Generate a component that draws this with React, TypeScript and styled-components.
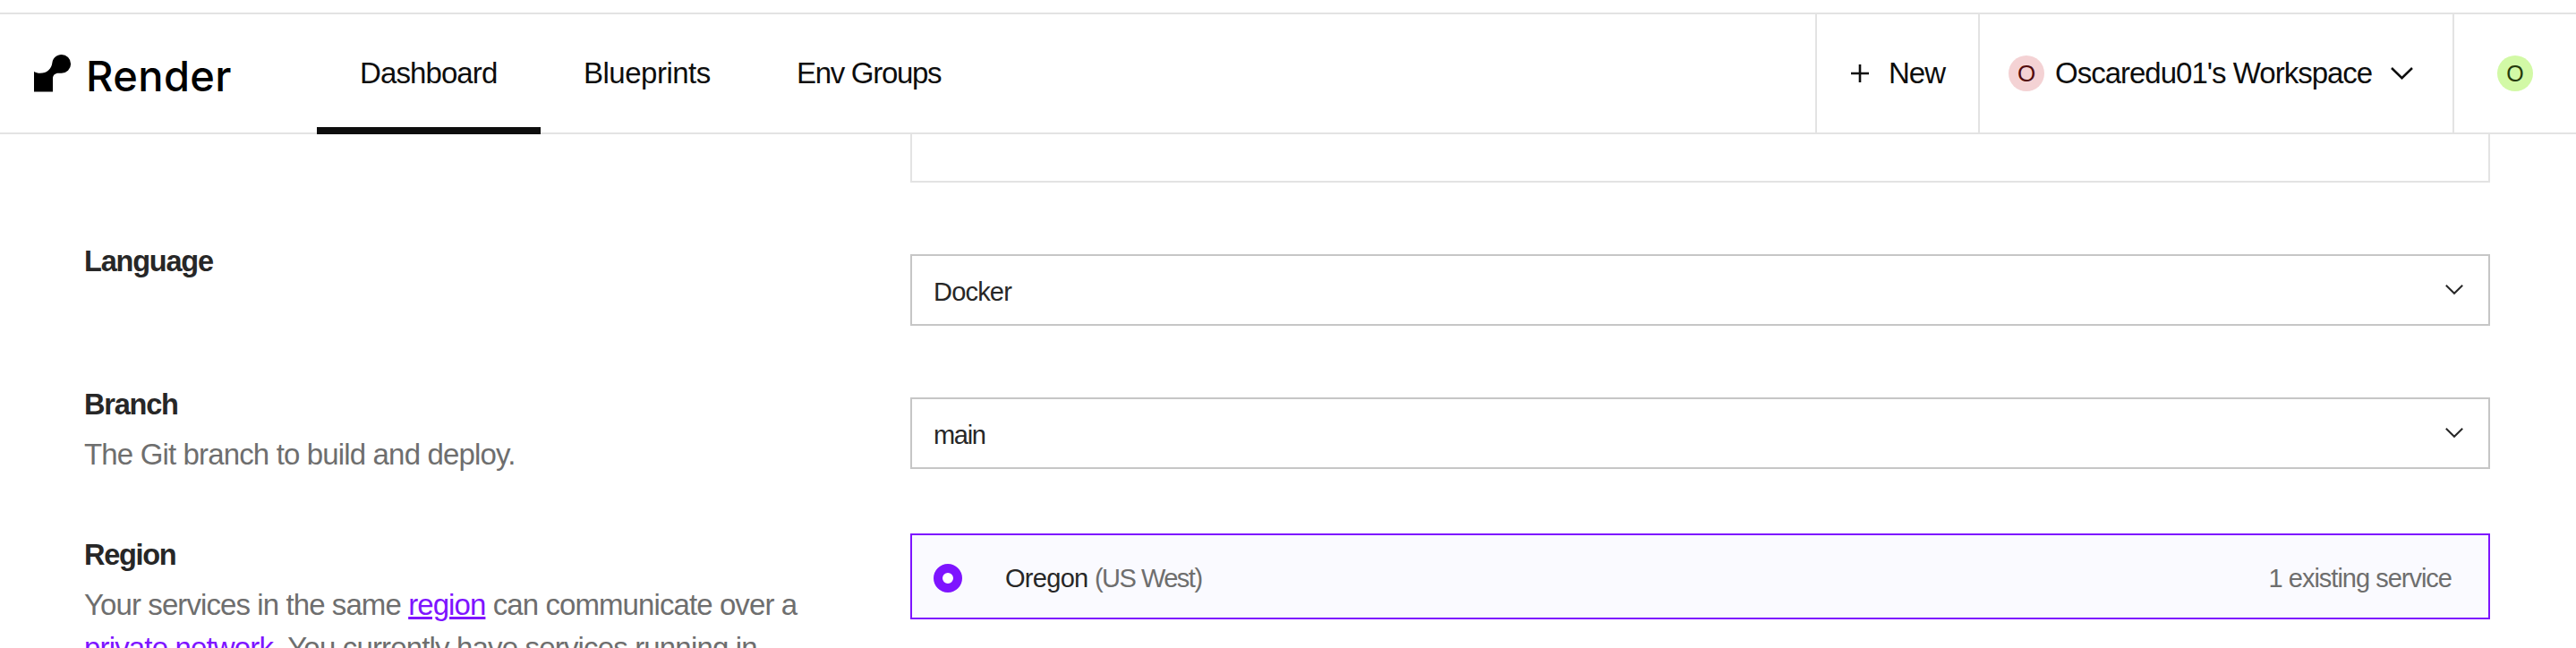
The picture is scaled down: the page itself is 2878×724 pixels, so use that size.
import React from "react";
import styled, { createGlobalStyle } from "styled-components";

const Global = createGlobalStyle`
  * { box-sizing: border-box; }
  body {
    margin: 0;
    background: #fff;
    overflow: hidden;
    font-family: "Liberation Sans", Arial, sans-serif;
    color: #0d0d0d;
  }
`;

const Page = styled.div`
  display: flex;
  flex-direction: column;
  height: 724px;
  padding-top: 14px;
  overflow: hidden;
`;

const Header = styled.header`
  display: flex;
  flex: none;
  height: 136px;
  border-top: 2px solid #e3e3e3;
  box-shadow: inset 0 -2px #e3e3e3;
`;

const Brand = styled.a`
  display: flex;
  align-items: flex-start;
  width: 354px;
  padding: 45px 0 0 38px;
`;

const Wordmark = styled.span`
  margin: -6px 0 0 16px;
  font: 500 47px/60px Inter, sans-serif;
  letter-spacing: 0.4px;
  color: #000;
`;

const Nav = styled.nav`
  display: flex;
  flex: 1;
`;

const Text = styled.span<{ $track?: number; $left?: number }>`
  margin-left: ${(p) => p.$left ?? 0}px;
  letter-spacing: ${(p) => p.$track ?? 0}px;
  white-space: nowrap;
`;

const Tab = styled.a<{ $active?: boolean; $width: number }>`
  width: ${(p) => p.$width}px;
  padding: 46px 0 0 48px;
  font-size: 33px;
  line-height: 40px;
  box-shadow: ${(p) => (p.$active ? "inset 0 -8px #0d0d0d" : "none")};
`;

const Cell = styled.div<{ $width: number; $pad: number }>`
  display: flex;
  align-items: center;
  width: ${(p) => p.$width}px;
  margin-bottom: 2px;
  padding-left: ${(p) => p.$pad}px;
  border-left: 2px solid #e3e3e3;
  font-size: 33px;
  line-height: 40px;
`;

const Avatar = styled.span<{ $bg: string; $fg: string; $size: number }>`
  display: flex;
  align-items: center;
  justify-content: center;
  flex: none;
  width: 40px;
  height: 40px;
  border-radius: 50%;
  font-size: ${(p) => p.$size}px;
  line-height: 40px;
  background: ${(p) => p.$bg};
  color: ${(p) => p.$fg};
`;

const Glyph = styled.svg<{ $left?: number; $lift?: number }>`
  display: block;
  flex: none;
  margin-left: ${(p) => p.$left ?? 0}px;
  margin-bottom: ${(p) => p.$lift ?? 0}px;
`;

const Form = styled.main`
  display: flex;
  flex-direction: column;
  padding: 0 96px 0 94px;
`;

const Row = styled.section<{ $height: number }>`
  display: grid;
  grid-template-columns: 923px 1765px;
  flex: none;
  align-items: start;
  height: ${(p) => p.$height}px;
`;

const Caption = styled.div`
  display: flex;
  flex-direction: column;
`;

const Label = styled.h2`
  margin: 0;
  font-size: 32.5px;
  line-height: 48px;
  font-weight: 700;
  color: #272727;
`;

const Help = styled.p`
  margin: 8px 0 0;
  font-size: 33px;
  line-height: 48px;
  color: #6e6e6e;
  white-space: nowrap;
`;

const Link = styled.a`
  color: #7e14ff;
  text-decoration: underline;
  text-decoration-thickness: 3px;
  text-underline-offset: 2px;
`;

const Panel = styled.div`
  grid-column: 2;
  height: 54px;
  border: 2px solid #e3e3e3;
  border-top: 0;
`;

const Select = styled.div`
  display: flex;
  align-items: center;
  justify-content: space-between;
  height: 80px;
  margin-top: 16px;
  padding: 4px 28px 0 24px;
  border: 2px solid #c6c6c6;
  font-size: 29px;
  color: #272727;
`;

const Option = styled.div`
  display: flex;
  align-items: center;
  height: 96px;
  padding: 4px 41px 0 24px;
  border: 2px solid #7e14ff;
  background: #fafaff;
  font-size: 29px;
  color: #272727;
`;

const Radio = styled.span`
  flex: none;
  width: 32px;
  height: 32px;
  margin-right: 48px;
  border: 10px solid #7e14ff;
  border-radius: 50%;
  background: #fff;
`;

const Muted = styled.span<{ $track: number; $end?: boolean }>`
  margin-left: ${(p) => (p.$end ? "auto" : "0")};
  letter-spacing: ${(p) => p.$track}px;
  color: #6e6e6e;
`;

function Logo() {
  return (
    <Glyph width="42" height="42" viewBox="0 0 42 42">
      <path
        d="M30.700 0a10.400 10.400 0 0 1 0 20.800H27.500c-4 0-6.500 2.200-6.500 6.200V41.500H0V19c2 1.200 4.200 1.800 6.800 1.800C14.500 20.800 19.600 16 20.400 9 21.200 3.600 25.500 0 30.700 0z"
        fill="#000"
      />
    </Glyph>
  );
}

function Chevron({ width, left, lift }: { width: number; left?: number; lift?: number }) {
  return (
    <Glyph $left={left} $lift={lift} width={width} height={width * 0.56} viewBox="0 0 25 14">
      <path d="M1 1 12.500 12.200 24 1" fill="none" stroke="currentColor" strokeWidth="2.500" />
    </Glyph>
  );
}

export default function App() {
  return (
    <Page>
      <Global />
      <Header>
        <Brand>
          <Logo />
          <Wordmark>Render</Wordmark>
        </Brand>
        <Nav>
          <Tab $active $width={250}><Text $track={-0.9}>Dashboard</Text></Tab>
          <Tab $width={238}><Text $track={-0.5}>Blueprints</Text></Tab>
          <Tab $width={260}><Text $track={-1.3}>Env Groups</Text></Tab>
        </Nav>
        <Cell $width={182} $pad={38}>
          <Glyph width="20" height="20" viewBox="0 0 20 20">
            <path d="M10 0v20M0 10h20" stroke="#0d0d0d" strokeWidth="2.600" />
          </Glyph>
          <Text $track={-1} $left={22}>New</Text>
        </Cell>
        <Cell $width={530} $pad={32}>
          <Avatar $bg="#f4d2d4" $fg="#520b0d" $size={26}>O</Avatar>
          <Text $track={-1} $left={12}>Oscaredu01's Workspace</Text>
          <Chevron width={25} left={21} />
        </Cell>
        <Cell $width={138} $pad={48}>
          <Avatar $bg="#d2f9a6" $fg="#243b0b" $size={25}>O</Avatar>
        </Cell>
      </Header>
      <Form>
        <Row $height={118}>
          <Panel />
        </Row>
        <Row $height={160}>
          <Label><Text $track={-1.2}>Language</Text></Label>
          <Select>
            <Text $track={-0.8}>Docker</Text>
            <Chevron width={20} lift={4} />
          </Select>
        </Row>
        <Row $height={168}>
          <Caption>
            <Label><Text $track={-1.2}>Branch</Text></Label>
            <Help><Text $track={-0.85}>The Git branch to build and deploy.</Text></Help>
          </Caption>
          <Select>
            <Text $track={-1.3}>main</Text>
            <Chevron width={20} lift={4} />
          </Select>
        </Row>
        <Row $height={128}>
          <Caption>
            <Label><Text $track={-1.3}>Region</Text></Label>
            <Help>
              <Text $track={-0.91}>
                Your services in the same <Link>region</Link> can communicate over a
              </Text>
              <br />
              <Text $track={-0.84}>
                <Link>private network</Link>. You currently have services running in
              </Text>
            </Help>
          </Caption>
          <Option>
            <Radio />
            <Text $track={-0.7}>
              Oregon <Muted $track={-1.5}>(US West)</Muted>
            </Text>
            <Muted $end $track={-1}>1 existing service</Muted>
          </Option>
        </Row>
      </Form>
    </Page>
  );
}
